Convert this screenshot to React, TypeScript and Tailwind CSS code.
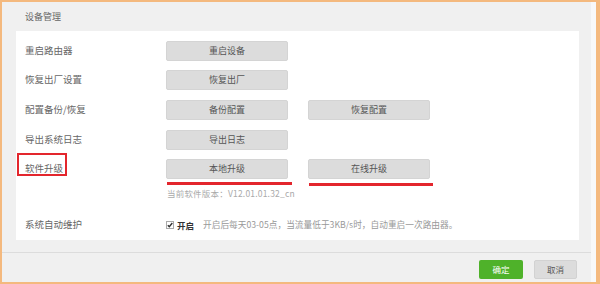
import React from "react";

const font = "font-['Noto_Sans_CJK_SC','Noto_Sans',sans-serif]";

function GrayButton({ label }: { label: string }) {
  return (
    <div className="w-[122px] h-[20px] rounded-[2px] bg-[#dcdcdc] border border-[#d4d4d4] flex items-center justify-center text-[9px] text-[#555]">
      {label}
    </div>
  );
}

function Row({
  label,
  children,
  className = "",
  boxed = false,
}: {
  label: string;
  children?: React.ReactNode;
  className?: string;
  boxed?: boolean;
}) {
  return (
    <div className={`flex items-center h-[20px] ${className}`}>
      <div className="relative w-[141px] text-[9.5px] text-[#666] leading-none">
        {label}
        {boxed && (
          <span className="absolute left-[-8px] top-[-11px] w-[50px] h-[23px] border-2 border-[#e3262d]" />
        )}
      </div>
      <div className="flex items-center gap-[20px]">{children}</div>
    </div>
  );
}

export default function App() {
  return (
    <div
      className={`w-[600px] h-[284px] flex border-t-2 border-l-2 border-b-2 border-r-4 border-[#f4b97e] bg-[#f0f0f0] overflow-hidden ${font}`}
    >
      <div className="flex-1 flex flex-col">
        {/* title */}
        <div className="h-[29px] flex items-center pl-[23px] text-[9px] text-[#666]">
          设备管理
        </div>

        {/* panel */}
        <div className="ml-[14px] mr-[12px] h-[209px] bg-white pl-[9px] pt-[10px]">
          <Row label="重启路由器">
            <GrayButton label="重启设备" />
          </Row>
          <Row label="恢复出厂设置" className="mt-[9px]">
            <GrayButton label="恢复出厂" />
          </Row>
          <Row label="配置备份/恢复" className="mt-[10px]">
            <GrayButton label="备份配置" />
            <GrayButton label="恢复配置" />
          </Row>
          <Row label="导出系统日志" className="mt-[10px]">
            <GrayButton label="导出日志" />
          </Row>
          <Row label="软件升级" className="mt-[9px]" boxed>
            <GrayButton label="本地升级" />
            <GrayButton label="在线升级" />
          </Row>

          {/* hand-drawn underlines */}
          <div className="flex items-start mt-[3px] pl-[142px]">
            <div className="w-[125px] h-[2.5px] bg-[#e3262d]" />
            <div className="ml-[17px] mt-[1px] w-[124px] h-[3px] bg-[#e3262d]" />
          </div>

          <div className="pl-[142px] mt-[1px] text-[8.5px] leading-[12px] text-[#aaa] tracking-[0.2px]">
            当前软件版本：V12.01.01.32_cn
          </div>

          <div className="flex items-center h-[20px] mt-[16px]">
            <div className="w-[141px] text-[9.5px] text-[#666] leading-none">
              系统自动维护
            </div>
            <div className="flex items-center">
              <svg width="8" height="8" viewBox="0 0 8 8" className="mr-[3px]">
                <rect x="0.5" y="0.5" width="7" height="7" fill="#fff" stroke="#aaa" />
                <path d="M1.8 4.2 L3.3 5.8 L6.3 2" fill="none" stroke="#333" strokeWidth="1.4" />
              </svg>
              <span className="text-[8.5px] font-bold text-[#333]">开启</span>
              <span className="ml-[9px] text-[8.7px] text-[#999]">
                开启后每天03-05点，当流量低于3KB/s时，自动重启一次路由器。
              </span>
            </div>
          </div>
        </div>

        {/* footer */}
        <div className="mt-[12px] border-t border-[#dcdcdc] flex-1 flex justify-end items-start pt-[7px] pr-[14px] gap-[11px]">
          <div className="w-[44px] h-[19px] rounded-[2px] bg-[#4fb22a] flex items-center justify-center text-[8.5px] text-white">
            确定
          </div>
          <div className="w-[43px] h-[19px] rounded-[2px] bg-[#dcdcdc] border border-[#d2d2d2] flex items-center justify-center text-[8.5px] text-[#555]">
            取消
          </div>
        </div>
      </div>
      <div className="w-[5px] bg-[#f8f8f8]" />
    </div>
  );
}
